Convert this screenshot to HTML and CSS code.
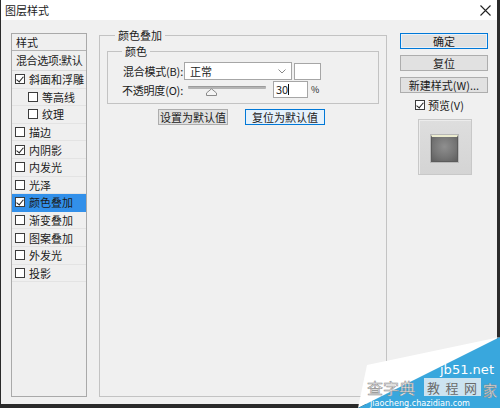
FILE: index.html
```html
<!DOCTYPE html>
<html lang="zh-CN">
<head>
<meta charset="utf-8">
<title>图层样式</title>
<link rel="stylesheet" href="styles.css">
</head>
<body>
<div class="window">
  <div class="titlebar">
    <span class="title">图层样式</span>
    <svg class="close" width="11" height="11" viewBox="0 0 11 11"><path d="M0.5 0.5L10.5 10.5M10.5 0.5L0.5 10.5" stroke="#222" stroke-width="1.1" fill="none"/></svg>
  </div>
  <div class="content">
    <div class="styles-list">
      <div class="list-head">样式</div>
      <div class="list-blend">混合选项:默认</div>
      <div class="item"><span class="cb checked"></span>斜面和浮雕</div>
      <div class="item sub"><span class="cb"></span>等高线</div>
      <div class="item sub"><span class="cb"></span>纹理</div>
      <div class="item"><span class="cb"></span>描边</div>
      <div class="item"><span class="cb checked"></span>内阴影</div>
      <div class="item"><span class="cb"></span>内发光</div>
      <div class="item"><span class="cb"></span>光泽</div>
      <div class="item active"><span class="cb checked"></span>颜色叠加</div>
      <div class="item"><span class="cb"></span>渐变叠加</div>
      <div class="item"><span class="cb"></span>图案叠加</div>
      <div class="item"><span class="cb"></span>外发光</div>
      <div class="item"><span class="cb"></span>投影</div>
    </div>

    <fieldset class="main">
      <legend>颜色叠加</legend>
      <fieldset class="inner">
        <legend>颜色</legend>
        <div class="row">
          <span class="label">混合模式(B):</span>
          <div class="select"><span>正常</span>
            <svg class="chev" width="8" height="5" viewBox="0 0 8 5"><path d="M0.5 0.5L4 4L7.5 0.5" stroke="#888" stroke-width="1" fill="none"/></svg>
          </div>
          <div class="swatch"></div>
        </div>
        <div class="row row2">
          <span class="label">不透明度(O):</span>
          <div class="slider">
            <div class="track"></div>
            <svg class="thumb" width="11" height="8" viewBox="0 0 11 8"><path d="M0.5 7.5L0.5 5L5.5 0.8L10.5 5L10.5 7.5Z" fill="#f4f4f4" stroke="#8a8a8a" stroke-width="1"/></svg>
          </div>
          <div class="num">30<span class="caret"></span></div>
          <span class="pct">%</span>
        </div>
      </fieldset>
      <div class="btnrow">
        <div class="btn w70">设置为默认值</div>
        <div class="btn w80 focus">复位为默认值</div>
      </div>
    </fieldset>

    <div class="side">
      <div class="btn primary">确定</div>
      <div class="btn">复位</div>
      <div class="btn">新建样式(W)...</div>
      <div class="preview-check"><span class="cb checked"></span>预览(V)</div>
      <div class="preview"><div class="swatch-prev"></div></div>
    </div>
  </div>

  <svg class="watermark" width="142" height="72" viewBox="0 0 142 72">
    <polygon points="9,29 142,1 0,72" fill="#ffffff"/>
    <polygon points="0,72 142,1 142,72" fill="#39a7dd"/>
    <text x="82" y="38" class="wm-site" textLength="54" lengthAdjust="spacingAndGlyphs">jb51.net</text>
    <rect x="66" y="42" width="57" height="18" fill="#e6edf3" opacity="0.85"/>
    <text x="9" y="58" class="wm-big" textLength="48" lengthAdjust="spacingAndGlyphs">查字典</text>
    <text x="69" y="57" class="wm-mid" textLength="50" lengthAdjust="spacing">教程网</text>
    <text x="125" y="60" class="wm-big" textLength="14" lengthAdjust="spacingAndGlyphs">家</text>
    <text x="12" y="70" class="wm-url" textLength="100" lengthAdjust="spacingAndGlyphs">jiaocheng.chazidian.com</text>
  </svg>
</div>
</body>
</html>
```

FILE: styles.css
```css
* { box-sizing: border-box; }
html, body { margin: 0; padding: 0; }
body {
  background: #2a2a2a;
  width: 500px;
  height: 408px;
  overflow: hidden;
  font-family: "Noto Sans CJK SC", "DejaVu Sans", sans-serif;
  font-size: 11px;
  color: #1b1b1b;
}
.window {
  position: relative;
  width: 496px;
  height: 404px;
  margin-left: 1px;
  background: #f0f0f0;
  display: flex;
  flex-direction: column;
}
.titlebar {
  height: 20px;
  background: #ffffff;
  display: flex;
  align-items: center;
  justify-content: space-between;
  padding: 0 6px 0 4px;
}
.title { font-size: 11px; line-height: 14px; color: #222; }
.close { display: block; }

.content {
  display: flex;
  align-items: flex-start;
  padding: 13px 0 0 10px;
}

/* left list */
.styles-list {
  width: 76px;
  height: 364px;
  border: 1px solid #a9a9a9;
  background: #efefef;
  flex: none;
}
.list-head {
  height: 17px;
  line-height: 16px;
  padding-left: 4px;
  border-bottom: 1px solid #b3b3b3;
}
.list-blend {
  height: 20px;
  line-height: 19px;
  padding-left: 4px;
  border-bottom: 1px solid #d9d9d9;
  white-space: nowrap;
  letter-spacing: -0.4px;
}
.item {
  height: 17.6px;
  display: flex;
  align-items: center;
  padding-left: 3px;
  border-bottom: 1px solid #e3e3e3;
  white-space: nowrap;
  line-height: 14px;
}
.item.sub { padding-left: 16px; }
.item.active { background: #3290ea; border-bottom-color: #3290ea; }
.cb {
  position: relative;
  width: 10px;
  height: 10px;
  border: 1px solid #3c3c3c;
  background: #fff;
  margin-right: 4px;
  flex: none;
}
.cb.checked::after {
  content: "";
  position: absolute;
  left: 2px;
  top: 0px;
  width: 3px;
  height: 6px;
  border-right: 1px solid #222;
  border-bottom: 1px solid #222;
  transform: rotate(40deg);
}

/* main fieldset */
fieldset { margin: 0; min-width: 0; }
.main {
  width: 288px;
  height: 369px;
  margin: -5px 0 0 12px;
  padding: 2px 7px 0 7px;
  border: 1px solid #c3c3c3;
  flex: none;
}
legend {
  padding: 0 3px;
  line-height: 14px;
  font-size: 11px;
}
.main > legend { margin-left: 8px; }
.inner {
  width: 272px;
  padding: 4px 0 5px 0;
  border: 1px solid #c3c3c3;
}
.inner > legend { margin-left: 14px; }
.row {
  display: flex;
  align-items: center;
  height: 18px;
}
.row2 { margin-top: 1px; height: 17px; }
.label {
  width: 75px;
  text-align: right;
  white-space: nowrap;
  line-height: 14px;
  letter-spacing: -0.2px;
}
.select {
  width: 108px;
  height: 18px;
  margin-left: 1px;
  background: #fff;
  border: 1px solid #a6a6a6;
  display: flex;
  align-items: center;
  justify-content: space-between;
  padding: 0 5px 0 5px;
  line-height: 14px;
}
.chev { display: block; }
.swatch {
  width: 27px;
  height: 17px;
  margin-left: 2px;
  background: #fff;
  border: 1px solid #a6a6a6;
}
.slider {
  position: relative;
  width: 84px;
  height: 17px;
  margin-left: 2px;
  display: flex;
  align-items: flex-start;
  padding: 5px 3px 0 3px;
}
.track {
  width: 78px;
  height: 3px;
  background: #b4b4b4;
  border-top: 1px solid #9c9c9c;
  border-radius: 1px;
}
.thumb { position: absolute; left: 21px; top: 7px; display: block; }
.num {
  width: 35px;
  height: 17px;
  margin-left: 4px;
  background: #fff;
  border: 1px solid #a6a6a6;
  line-height: 15px;
  padding-left: 2px;
  display: flex;
  align-items: center;
}
.caret {
  display: inline-block;
  width: 1px;
  height: 11px;
  background: #111;
}
.pct { margin-left: 3px; font-size: 9px; line-height: 14px; }

.btnrow {
  display: flex;
  gap: 17px;
  margin: 5px 0 0 51px;
}
.btn {
  height: 16px;
  background: #e1e1e1;
  border: 1px solid #adadad;
  display: flex;
  align-items: center;
  justify-content: center;
  line-height: 14px;
  white-space: nowrap;
}
.btn.w70 { width: 70px; }
.btn.w80 { width: 80px; }
.btn.focus { background: #e5f1fb; border-color: #0078d7; }

/* right column */
.side {
  width: 88px;
  margin-left: 13px;
  display: flex;
  flex-direction: column;
  gap: 6px;
  flex: none;
}
.btn.primary { border-color: #0078d7; background: #e1e1e1; box-shadow: inset 0 0 0 1px #e8f1fa; }
.preview-check {
  display: flex;
  align-items: center;
  justify-content: center;
  height: 14px;
  margin-top: -1px;
  padding-right: 9px;
  line-height: 14px;
}
.preview-check .cb { margin-right: 3px; }
.preview {
  align-self: center;
  width: 54px;
  height: 56px;
  margin-top: 1px;
  margin-left: 1px;
  background: linear-gradient(180deg, #dedede, #d4d4d4);
  border: 1px solid #c8c8c8;
  box-shadow: inset 1px 1px 0 #ececec;
  display: flex;
  align-items: center;
  justify-content: center;
  padding-top: 2px;
}
.swatch-prev {
  width: 27px;
  height: 27px;
  border: 1px solid #5b5b5b;
  border-top: 2px solid #ececcf;
  background: radial-gradient(circle at 50% 40%, #8f8f8f 0%, #747474 60%, #5e5e5e 100%);
  box-shadow: 0 0 0 1px #b8b8b8;
}

/* watermark overlay */
.watermark {
  position: absolute;
  right: -3px;
  bottom: -4px;
  display: block;
}
.wm-site { font-family: "DejaVu Sans", sans-serif; font-size: 12px; fill: #ffffff; }
.wm-big { font-family: "Noto Sans CJK SC", sans-serif; font-size: 15px; fill: #ffffff; stroke: #8a8a8a; stroke-width: 0.5px; }
.wm-mid { font-family: "Noto Sans CJK SC", sans-serif; font-size: 13px; fill: #6a6a6a; }
.wm-url { font-family: "DejaVu Sans", sans-serif; font-size: 9px; fill: #ffffff; }
```
